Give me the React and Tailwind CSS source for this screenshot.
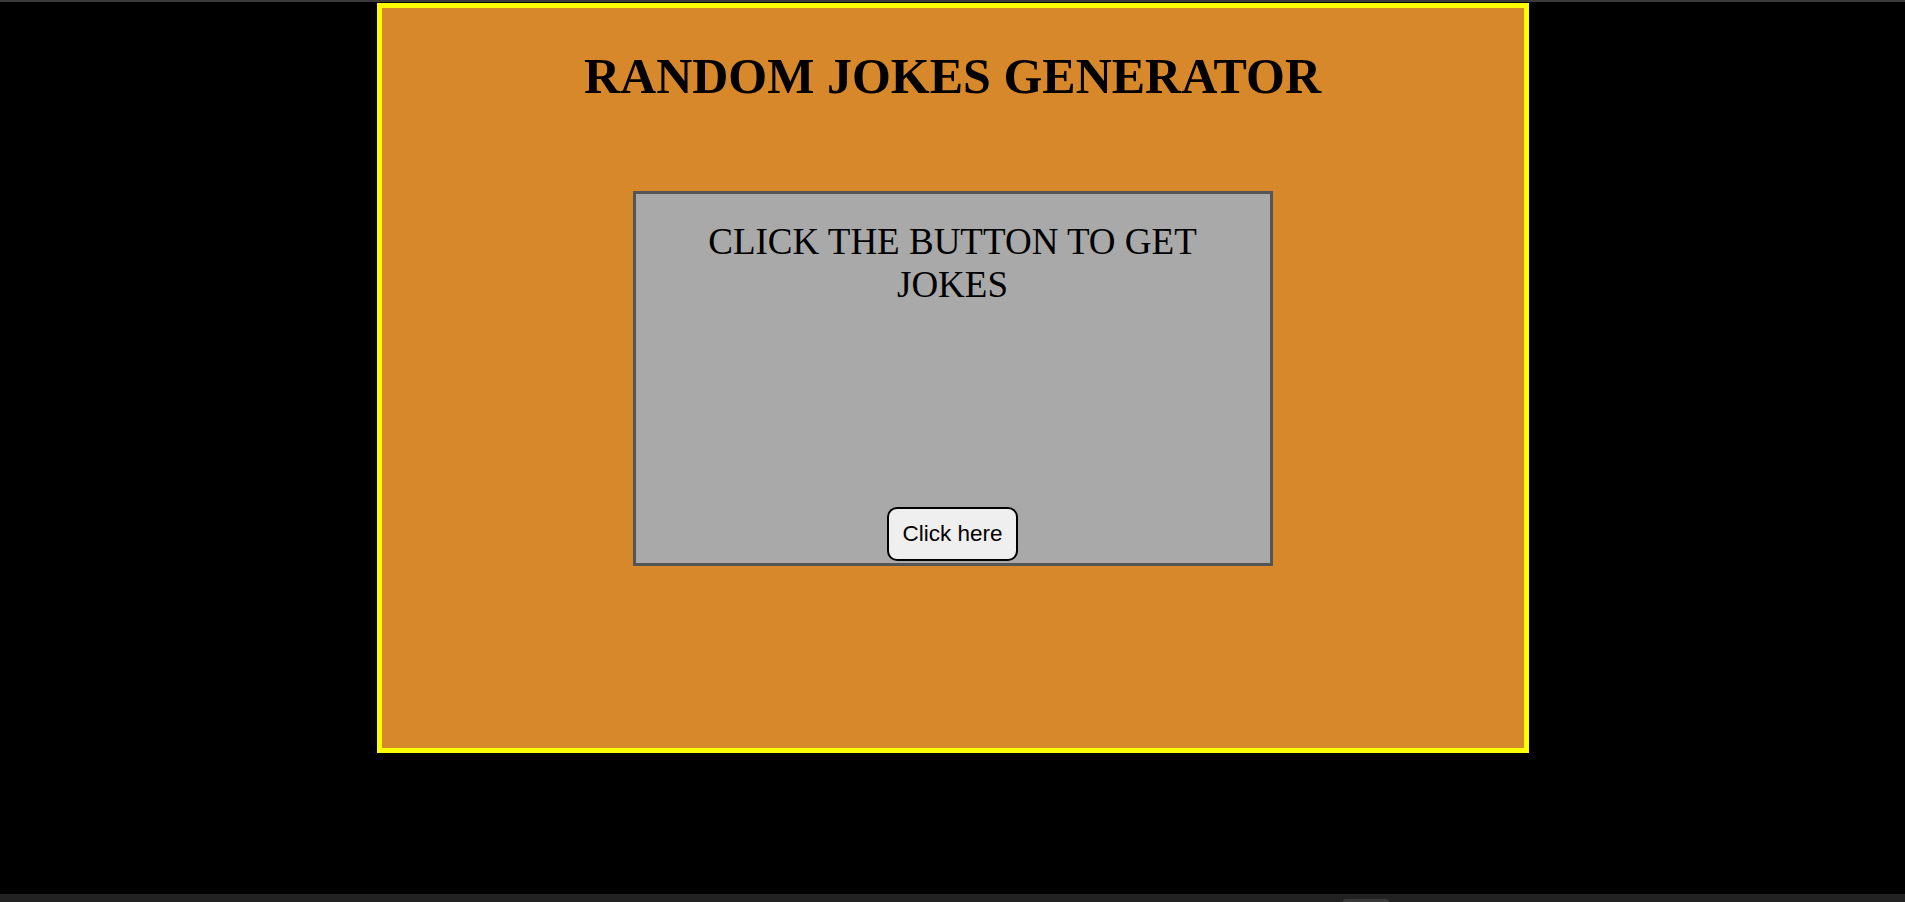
import { useState } from 'react';

const jokes = [
  'CLICK THE BUTTON TO GET JOKES',
];

export default function App() {
  const [joke] = useState(jokes[0]);

  return (
    <div className="h-screen w-full bg-black flex flex-col overflow-hidden">
      {/* top strip */}
      <div className="h-[2px] bg-[#3a3a3a] shrink-0" />

      <main className="flex-1 flex justify-center items-start pt-[1px]">
        <div className="w-[1152px] h-[750px] border-[5px] border-[#ffff00] bg-[#d7882a] flex flex-col items-center">
          <h1 className="mt-[39px] text-[50px] leading-[normal] font-bold text-black font-['Liberation_Serif','Times_New_Roman',serif]">
            RANDOM JOKES GENERATOR
          </h1>

          <div className="mt-[86px] w-[640px] h-[375px] border-[3px] border-[#555555] bg-[#a9a9a9] flex flex-col items-center px-[20px]">
            <p className="pt-[26px] text-[37px] leading-[normal] text-center text-black font-['Liberation_Serif','Times_New_Roman',serif]">
              {joke}
            </p>
            <button
              type="button"
              className="mt-auto mb-[2px] px-[13px] py-[12px] text-[22.5px] leading-[26px] text-black bg-[#efefef] border-2 border-black rounded-[10px] font-['Liberation_Sans',Arial,sans-serif]"
            >
              Click here
            </button>
          </div>
        </div>
      </main>

      {/* bottom strip */}
      <div className="h-[8px] bg-[#222222] shrink-0 flex items-end">
        <div className="ml-[1343px] w-[46px] h-[3px] rounded-t-[3px] bg-[#3a3a3a]" />
      </div>
    </div>
  );
}
